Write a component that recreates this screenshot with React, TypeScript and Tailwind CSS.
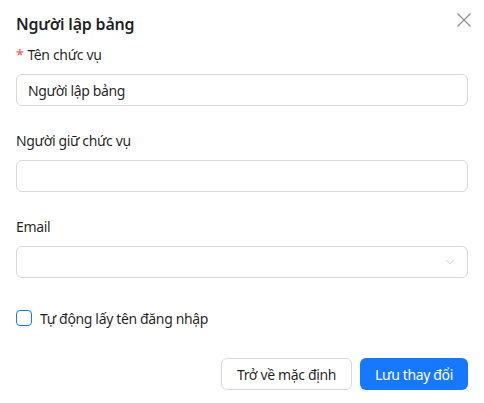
import { ChevronDown } from "lucide-react";

const font = { fontFamily: '"Noto Sans", "Open Sans", sans-serif' };

function Label({ children, required }: { children: React.ReactNode; required?: boolean }) {
  return (
    <div className="h-[22px] text-[14px] leading-[22px] text-[rgba(0,0,0,0.88)] mb-2 flex items-center">
      {required && <span className="text-[#ff4d4f] mr-1 text-[14px]">*</span>}
      {children}
    </div>
  );
}

export default function App() {
  return (
    <div className="w-[484px] h-[403px] bg-white px-4 pt-3 relative tracking-[-0.35px]" style={font}>
      {/* Header */}
      <div className="flex items-center justify-between h-6">
        <h2 className="text-[16px] font-semibold leading-6 text-[rgba(0,0,0,0.88)] tracking-[-0.2px]">Người lập bảng</h2>
        <button className="absolute left-[457px] top-[13px] w-[14px] h-[14px] text-[rgba(0,0,0,0.45)]">
          <svg width="14" height="14" viewBox="0 0 14 14" fill="none" stroke="currentColor" strokeWidth="1.2">
            <path d="M0.5 0.5 L13.5 13.5 M13.5 0.5 L0.5 13.5" />
          </svg>
        </button>
      </div>

      <div className="mt-2">
        <Label required>Tên chức vụ</Label>
        <div className="h-8 border border-[#d9d9d9] rounded-md px-[11px] flex items-center text-[14px] text-[rgba(0,0,0,0.88)]">
          Người lập bảng
        </div>
      </div>

      <div className="mt-6">
        <Label>Người giữ chức vụ</Label>
        <div className="h-8 border border-[#d9d9d9] rounded-md" />
      </div>

      <div className="mt-6">
        <Label>Email</Label>
        <div className="h-8 border border-[#d9d9d9] rounded-md flex items-center justify-end pr-[10px] text-[#bfbfbf]">
          <ChevronDown size={14} strokeWidth={1.4} />
        </div>
      </div>

      <div className="mt-[29px] h-[22px] flex items-center gap-2">
        <span className="w-4 h-4 border border-[#1677ff] rounded-[4px] bg-white" />
        <span className="text-[14px] text-[rgba(0,0,0,0.88)]">Tự động lấy tên đăng nhập</span>
      </div>

      <div className="mt-[29px] flex justify-end gap-2">
        <button className="h-8 px-[15px] border border-[#d9d9d9] rounded-md text-[14px] text-[rgba(0,0,0,0.88)] bg-white">
          Trở về mặc định
        </button>
        <button className="h-8 px-[15px] rounded-md text-[14px] text-white bg-[#1677ff]">
          Lưu thay đổi
        </button>
      </div>
    </div>
  );
}
